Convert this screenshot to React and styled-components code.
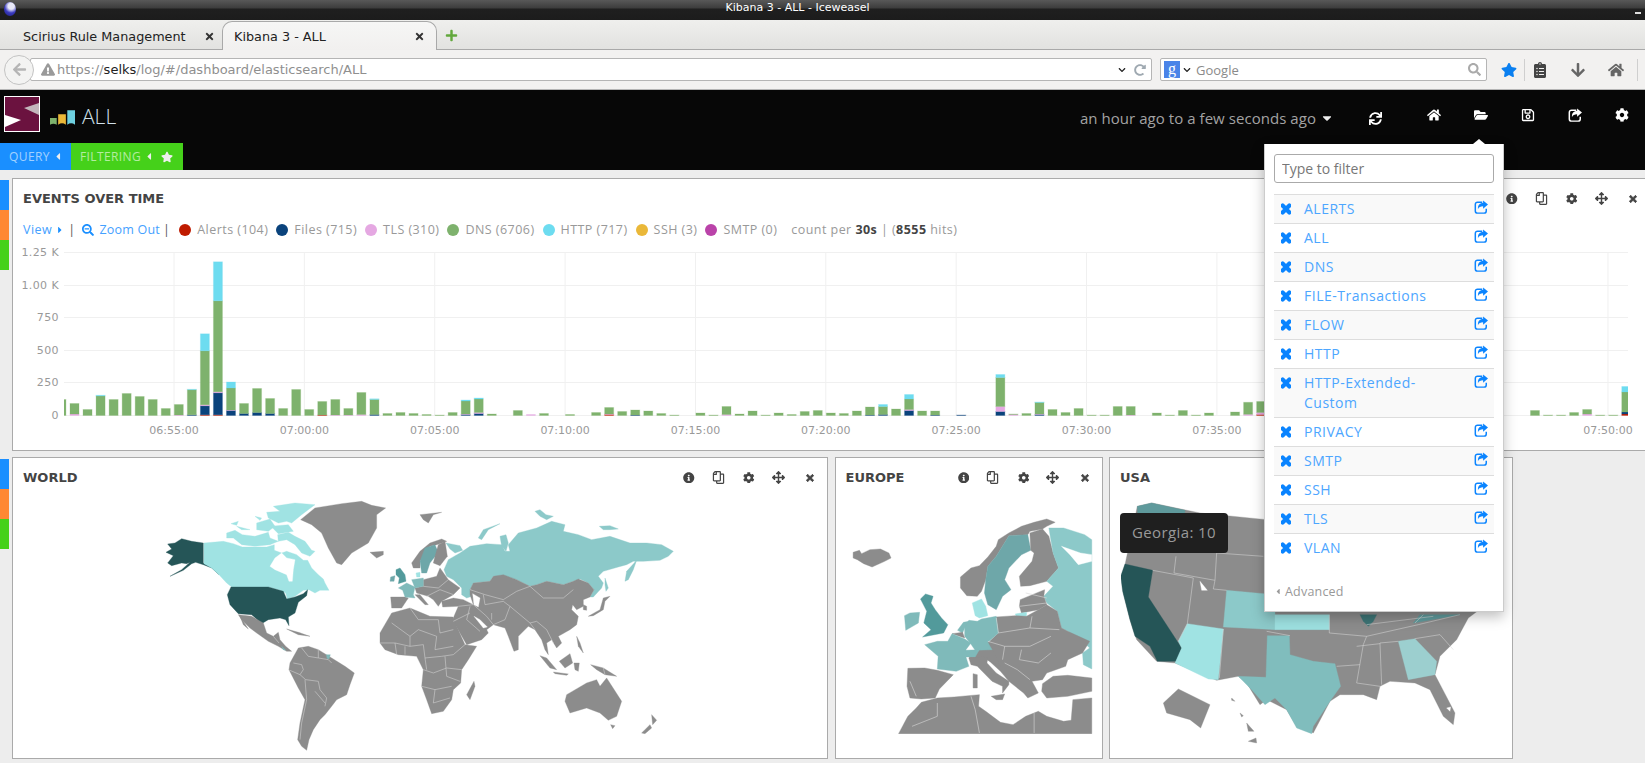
import React from 'react';
import styled, { createGlobalStyle } from 'styled-components';
import {
  FaArrowLeft,
  FaExclamationTriangle,
  FaChevronDown,
  FaRedoAlt,
  FaStar,
  FaClipboardList,
  FaArrowDown,
  FaHome,
  FaCaretDown,
  FaCaretLeft,
  FaCaretRight,
  FaSync,
  FaFolderOpen,
  FaRegSave,
  FaCog,
  FaTimes,
  FaInfoCircle,
  FaRegCopy,
  FaArrowsAlt,
  FaSearchMinus,
  FaPlus,
  FaSearch,
} from 'react-icons/fa';

const GRAY = '#8c8c8c';
const DARK = '#255557';
const PALE = '#a0e3e3';
const RUSSIA = '#8cc9c9';
const TEAL = '#7fbaba';
const SWEDEN = '#6ea7a9';
const UKC = '#529a9b';

const C = {
  alert: '#bf1b00',
  files: '#0a437c',
  tls: '#e5a8e2',
  dns: '#7eb26d',
  http: '#6ddcf0',
  ssh: '#eab839',
  smtp: '#ba43a9',
};

// index, dns, http, tls, files, alert (heights in px)
const BARS = [
  [-1, 16], [0, 10.5, 0, 1.5], [1, 6], [2, 19.5, 0.7], [3, 16], [4, 22], [5, 19], [6, 16], [7, 7], [8, 10.5, 0, 0.5],
  [9, 25, 0.5, 0, 0.7], [10, 54, 17, 1, 9, 0.7], [11, 91, 39, 1, 22, 0.7], [12, 22, 6, 0.5, 5], [13, 10, 0, 0, 2], [14, 24, 0, 0, 3],
  [15, 15, 0, 0, 2], [16, 7], [17, 26], [18, 6], [19, 13.5, 0, 0, 0, 0.5], [20, 15.5, 0, 0.5], [21, 6.5, 0, 0.5], [22, 22, 0, 1],
  [23, 15, 0.7, 0, 1], [24, 2], [25, 3], [26, 2], [27, 1], [28, 0.5], [29, 3], [30, 13, 1, 0.5, 1], [31, 13.5, 1, 1, 2],
  [32, 1.5], [34, 5], [35, 0, 0, 1], [36, 2], [38, 1], [40, 3], [41, 6.5, 0, 0.5, 0, 1], [42, 4], [43, 5, 0, 0, 0.5], [44, 4.5],
  [45, 2], [46, 0.5], [48, 2.5], [49, 0.5], [50, 8, 0, 1], [51, 1.5], [52, 4.5], [53, 0.5], [54, 2.5], [55, 1], [56, 4], [57, 5],
  [58, 2.5], [59, 2], [60, 4.5], [61, 8, 0, 0, 0.5], [62, 8, 2, 0, 1], [63, 6.5], [64, 10.5, 4.5, 1, 5], [65, 4.5], [66, 4, 0, 0, 0.5],
  [68, 0, 0, 0, 0.5], [71, 29, 3, 5, 4], [72, 0.5, 0, 1], [73, 2], [74, 11.5, 0.5, 0.5, 1], [75, 6], [76, 3], [77, 7], [78, 0.5],
  [79, 0.5], [80, 9], [81, 8.5, 0, 0.5], [83, 2.5], [84, 0.5], [85, 5], [86, 0.5], [87, 2.5], [89, 3.5], [90, 12, 0, 1.2], [91, 11, 0, 2, 0, 1],
  [112, 5], [113, 0.5], [114, 0.5], [115, 3], [116, 4.5, 0, 1.5], [117, 0.5], [118, 0.5], [119, 20, 5.5, 0, 2, 1.5],
];

const Y_TICKS = [
  ['1.25 K', 252],
  ['1.00 K', 285],
  ['750', 317],
  ['500', 350],
  ['250', 382],
  ['0', 415],
];

// the 07:40 and 07:45 labels sit behind the open dashboard menu
const X_TICKS = [
  '06:55:00', '07:00:00', '07:05:00', '07:10:00', '07:15:00', '07:20:00',
  '07:25:00', '07:30:00', '07:35:00', '', '', '07:50:00',
];

const LEGEND = [
  ['Alerts (104)', C.alert],
  ['Files (715)', C.files],
  ['TLS (310)', C.tls],
  ['DNS (6706)', C.dns],
  ['HTTP (717)', C.http],
  ['SSH (3)', C.ssh],
  ['SMTP (0)', C.smtp],
];

const DASHBOARDS = [
  'ALERTS', 'ALL', 'DNS', 'FILE-Transactions', 'FLOW', 'HTTP', 'HTTP-Extended-Custom',
  'PRIVACY', 'SMTP', 'SSH', 'TLS', 'VLAN',
];

// coordinates read off the 3x crop starting at (155,470)
const AMERICAS = [
  [DARK, '145,210 110,205 80,197 60,210 38,213 50,228 33,238 55,248 38,270 50,278 80,270 95,272 105,268 80,290 45,310 85,292 110,272 122,268 145,275 170,285 192,305 180,290 165,280 145,270'],
  [PALE, '147,210 205,205 235,212 262,222 300,222 335,222 358,215 358,232 380,240 395,235 425,245 445,262 458,262 470,285 490,305 505,318 510,330 522,352 495,352 480,360 462,350 445,352 420,370 397,378 392,360 375,352 340,342 230,342 215,330 192,305 170,285 147,272'],
  ['#fff', '345,280 360,255 380,240 395,255 420,260 415,290 412,325 402,325 395,305 360,290'],
  [PALE, '215,180 240,172 262,185 300,190 340,178 345,195 370,205 345,215 300,220 260,215 235,195 215,195'],
  [PALE, '228,152 250,145 245,157'],
  [PALE, '245,160 285,170 260,170'],
  [PALE, '300,130 320,135 315,142'],
  [PALE, '305,150 345,138 360,160 340,175 305,170'],
  [PALE, '348,160 400,155 415,175 370,182'],
  [PALE, '368,185 400,178 420,190 450,205 470,232 480,235 465,250 440,240 420,215 395,200 370,205'],
  [PALE, '355,100 420,90 480,95 440,125 410,150 395,145 370,150 340,135 335,118 375,115'],
  [DARK, '228,342 340,342 385,355 395,378 420,372 445,362 458,350 455,368 430,388 420,420 400,432 402,458 392,440 375,435 340,440 320,452 290,425 250,422 225,395 217,365'],
  [GRAY, '437,140 480,105 560,92 620,85 650,97 692,105 665,125 665,165 640,210 590,240 560,275 545,270 520,225 500,180 470,155'],
  [GRAY, '645,238 685,235 685,245 665,255'],
  [GRAY, '250,425 290,430 325,450 335,480 355,490 370,478 375,500 392,520 410,535 395,535 370,520 340,505 305,480 285,465 260,440'],
  [GRAY, '255,430 265,445 280,468 265,455'],
  [TEAL, '380,520 392,532 385,530'],
  [GRAY, '395,468 430,478 465,490 430,485'],
  [GRAY, '405,570 430,525 460,520 490,530 530,555 570,580 598,600 585,635 575,665 545,680 530,700 510,725 495,740 475,770 462,800 455,832 440,820 428,800 435,750 450,680 430,645 402,590'],
  [TEAL, '514,545 526,545 522,558 516,556'],
];
const AMERICAS_LINES = [
  '415,570 440,575 445,590 435,605 452,620 490,625 495,650 515,675 510,700',
  '450,620 455,680 440,750 435,800',
  '440,525 460,550 490,555 520,560 530,570',
  '480,655 510,690',
  '400,590 435,605',
  '490,530 490,555',
  '355,490 372,510',
];

// coordinates read off the 3x crop starting at (370,470)
const EURASIA = [
  [GRAY, '150,125 215,118 190,125 175,150 160,140'],
  [GRAY, '125,270 150,235 180,210 215,198 230,205 200,215 180,220 150,265 150,285 130,285'],
  [SWEDEN, '150,265 165,225 195,215 205,238 180,270 170,300 155,300'],
  [GRAY, '195,250 205,215 225,205 232,250 210,278 190,270'],
  [UKC, '78,290 90,285 105,305 108,325 85,332 88,315 78,305'],
  [SWEDEN, '62,312 75,308 72,325 60,325'],
  [GRAY, '62,372 105,372 115,375 95,405 65,405'],
  [RUSSIA, '222,290 235,260 270,240 300,220 350,212 395,215 405,235 420,235 415,215 445,180 500,165 545,145 585,155 580,175 625,185 665,200 720,190 780,210 830,210 875,215 910,235 895,250 870,262 820,265 790,265 770,275 745,282 700,295 685,310 700,330 695,345 670,372 660,372 672,350 655,330 630,318 610,325 580,335 530,325 500,335 480,340 440,320 400,308 370,310 360,325 310,330 300,350 320,365 290,375 275,365 275,345 250,320 230,310'],
  [RUSSIA, '228,210 270,218 278,232 255,240 240,228'],
  [RUSSIA, '325,195 340,170 390,152 355,170 335,200'],
  [RUSSIA, '495,115 510,110 528,125 550,130 530,140 510,130'],
  [RUSSIA, '688,160 720,158 745,168 720,170 700,170'],
  [RUSSIA, '705,315 715,345 708,355 705,335'],
  [RUSSIA, '765,325 770,295 800,262 790,290 775,320'],
  [RUSSIA, '390,190 408,185 415,210 408,235 395,220'],
  [GRAY, '300,350 310,330 360,325 370,310 400,305 440,320 480,340 500,335 530,325 580,335 610,325 625,318 655,330 672,350 660,372 640,380 640,400 620,410 608,395 605,410 625,430 620,455 600,470 565,490 575,510 560,525 545,500 530,510 535,545 525,530 515,500 495,470 475,460 445,490 445,530 432,535 415,490 405,465 370,455 350,470 355,480 335,500 290,515 270,480 250,445 252,430 265,400 218,402 215,385 250,375 280,380 310,395 300,365'],
  ['#fff', '308,362 330,375 325,402 312,395'],
  ['#fff', '312,430 340,465 352,462 330,440'],
  [GRAY, '30,480 65,420 120,405 180,430 250,432 260,460 285,515 320,520 295,560 275,590 272,630 250,650 245,680 220,715 185,722 170,680 155,640 160,590 140,550 85,545 45,530 30,510'],
  [GRAY, '290,665 312,625 315,640 300,680'],
  [GRAY, '160,320 200,310 210,285 235,320 270,345 250,365 215,385 205,400 190,380 175,370 140,360 135,345 160,340'],
  [TEAL, '85,345 110,330 135,342 130,365 135,375 105,372 98,352'],
  [TEAL, '125,320 160,315 160,340 135,345'],
  [PALE, '138,300 150,298 150,312 140,312'],
  [GRAY, '135,365 150,365 175,395 165,395'],
  [GRAY, '655,430 690,410 700,375 720,370 705,385 700,410 670,428'],
  [GRAY, '640,395 650,400 650,412 640,410'],
  [GRAY, '620,490 630,510 640,540 625,520'],
  [GRAY, '510,548 530,555 560,590 540,585'],
  [GRAY, '550,597 595,603 590,607 555,602'],
  [GRAY, '568,565 600,542 608,570 585,585'],
  [GRAY, '612,570 628,570 625,595 615,590'],
  [GRAY, '662,575 700,585 740,610 705,605 680,590'],
  [GRAY, '590,665 650,630 680,620 690,640 710,615 755,685 740,730 715,742 690,720 650,705 600,720 585,685'],
  [GRAY, '722,755 735,758 728,767'],
  [GRAY, '815,780 840,755 845,765 825,782'],
  [GRAY, '845,725 860,742 848,755'],
];
const EURASIA_LINES = [
  '480,340 520,375 580,375 610,350',
  '300,350 345,365 400,380 440,355 480,340',
  '340,365 345,395 400,385 420,400 405,440 370,455',
  '420,400 480,450 500,445 530,470 550,510',
  '480,450 495,470',
  '265,400 310,395 350,430 370,455',
  '300,400 290,440 330,475',
  '120,405 145,440 205,440 210,480 250,470',
  '65,450 120,490 145,470 200,490 195,530 250,520',
  '30,510 75,510 120,520 160,515 165,555 215,550 250,545 285,515',
  '120,490 120,520',
  '75,510 80,545',
  '105,520 105,545',
  '160,590 190,600 230,585 275,590',
  '165,555 170,590',
  '225,550 230,610 270,625',
  '155,640 195,650 245,640',
  '195,650 190,690 240,675',
  '160,340 205,345 235,320',
  '170,370 210,350 250,365',
  '700,585 705,605',
  '250,445 300,420',
  '365,420 365,440',
];

// x 2.376, y 3 crop starting at (790,430)
const EUROPE = [
  [GRAY, '150,358 165,352 170,362 190,350 215,348 235,360 240,375 225,385 195,402 175,392 160,380 150,375'],
  [GRAY, '405,432 430,405 450,398 470,372 490,340 495,320 520,300 550,280 580,268 610,258 630,268 610,280 600,288 570,295 565,305 520,308 490,370 470,400 465,440 455,475 445,490 420,488 405,465'],
  [SWEDEN, '470,400 490,370 520,308 565,305 572,352 550,365 520,405 510,440 525,470 505,490 490,530 470,515 462,480 465,440'],
  [GRAY, '570,300 600,288 615,310 625,360 638,405 610,445 570,458 548,460 545,430 575,385 580,360 572,352'],
  [RUSSIA, '615,285 650,285 700,305 717,320 717,708 697,695 695,660 712,645 695,625 660,595 645,585 635,535 610,510 603,490 625,460 610,445 638,405 625,360'],
  ['#fff', '645,340 690,360 717,365 717,385 685,395 665,365'],
  [GRAY, '547,500 605,470 603,490 610,515 590,530 550,540 545,520'],
  [PALE, '535,543 562,538 562,550 538,550'],
  [GRAY, '490,552 535,548 562,550 590,530 610,515 635,535 645,585 660,595 712,625 695,660 660,680 655,700 610,720 600,740 575,745 590,780 565,795 555,780 545,770 520,745 500,715 470,680 475,665 440,675 425,675 470,630 495,600'],
  [GRAY, '425,672 470,625 482,650 500,700 470,682'],
  [TEAL, '415,580 425,562 445,565 455,558 490,550 495,600 470,628 480,650 440,652 428,630 415,610'],
  [PALE, '433,510 455,498 465,520 470,548 450,555 440,548'],
  [TEAL, '398,592 412,568 425,565 415,585 410,600'],
  [GRAY, '385,602 410,598 415,615'],
  [TEAL, '320,635 350,625 375,625 385,602 415,618 430,630 418,650 418,672 425,700 395,715 350,708 352,670'],
  [TEAL, '415,652 450,650 440,672 418,672'],
  [UKC, '310,498 322,483 340,490 335,510 345,530 360,555 375,575 365,600 315,612 335,590 318,570 325,535'],
  [TEAL, '272,548 285,540 308,538 305,570 275,592'],
  [GRAY, '280,706 320,705 350,712 388,725 355,768 345,795 312,798 285,795 278,760'],
  [GRAY, '425,675 470,672 468,690 490,720 520,745 520,755 505,780 505,760 480,745 445,700 430,695'],
  [GRAY, '435,722 445,725 445,765 435,765'],
  [GRAY, '478,790 510,783 505,800 490,800'],
  [GRAY, '600,752 625,730 660,727 717,735 717,775 660,790 610,795 598,775'],
  [GRAY, '258,902 280,850 300,825 312,808 350,795 390,792 450,785 448,820 465,835 500,868 530,875 560,850 590,835 610,850 650,865 668,862 672,800 717,795 717,902'],
];
const EUROPE_LINES = [
  '490,555 495,600 570,585 640,590',
  '570,585 575,550',
  '470,625 510,640 570,640 620,610',
  '510,640 505,680',
  '550,650 545,680 590,690 620,660',
  '510,690 540,710',
  '540,710 570,740',
  '430,790 440,830 450,900',
  '350,810 350,850 290,880',
  '580,840 580,900',
  '285,745 300,790',
  '560,480 610,495',
  '545,520 610,510',
];

// 3x crop starting at (1100,490)
const USA = [
  [GRAY, '112,40 155,30 300,60 500,80 700,70 1205,300 1105,375 1070,440 1020,490 1005,545 1065,660 1060,695 1030,670 990,590 945,570 870,565 840,580 830,620 790,605 720,605 690,625 640,720 590,700 560,650 500,620 480,635 440,570 415,550 360,560 350,562 225,510 170,505 110,440 90,380 70,300 65,250 75,215'],
  ['#5f9a9c', '112,40 155,30 255,52 250,110 115,95'],
  [DARK, '75,213 158,232 145,312 245,465 228,505 172,505 150,460 105,430 90,380 68,295 62,250'],
  [PALE, '262,392 370,408 355,560 325,558 225,510 245,465 235,445'],
  [RUSSIA, '380,292 525,305 525,410 370,402'],
  ['#9de0e0', '525,365 688,365 688,410 525,410'],
  ['#80bdbd', '502,428 568,428 570,485 640,505 705,512 722,580 690,625 640,700 635,722 590,705 560,650 525,615 495,635 455,590 415,550 498,553'],
  ['#9ccfcf', '895,445 945,437 1010,505 1005,545 925,560'],
  ['#3d7475', '780,365 830,365 820,385 805,400 790,385'],
  ['#5f9a9c', '940,390 1080,365 960,365'],
  ['#fff', '300,265 322,292 305,292'],
  ['#fff', '1040,645 1052,642 1050,655'],
  [GRAY, '190,630 235,588 330,635 302,705 270,680 200,660'],
  [GRAY, '395,615 405,625 395,622'],
  [GRAY, '420,660 430,668 425,672'],
  [GRAY, '440,690 462,715 445,715'],
  [GRAY, '445,745 468,735 470,750'],
];
const USA_LINES = [
  '228,190 222,240 345,262 350,180 490,190',
  '158,232 280,255 262,392 235,445',
  '345,262 340,288 380,292',
  '500,415 570,428',
  '688,420 800,430 790,455 770,570 840,580',
  '710,520 780,515',
  '800,430 955,395 1080,365',
  '840,450 845,575',
  '895,445 840,450',
  '945,437 1020,425 1060,470',
  '688,365 688,420',
  '358,555 370,408',
  '970,365 945,390',
  '800,395 1000,370',
  '770,460 840,452',
];

const MapLayer = ({ shapes, lines, transform }) => (
  <g transform={transform}>
    {shapes.map(([fill, points], i) => (
      <polygon key={i} fill={fill} stroke={fill} strokeWidth="1" strokeLinejoin="round" points={points} />
    ))}
    {lines.map((points, i) => (
      <polyline key={i} fill="none" stroke="#d8d8d8" strokeWidth="1.6" points={points} />
    ))}
  </g>
);

// font awesome 3 share glyph, the package only has a thinner one
const ShareIcon = ({ className }) => (
  <svg className={className} viewBox="0 0 16 16">
    <path d="M9.500 2.500H4a2.500 2.500 0 0 0-2.500 2.500v7.500A2.500 2.500 0 0 0 4 15h7.500a2.500 2.500 0 0 0 2.500-2.500V10" fill="none" stroke="currentColor" strokeWidth="1.7" />
    <path d="M16 5.200 10.400.5v3C6 3.500 4.300 6.300 4.500 10.500c1-2.700 3-3.500 5.900-3.500v3z" fill="currentColor" />
  </svg>
);

// icon, gap before it, size
const PANEL_TOOLS = [
  [FaInfoCircle, 0, 11.5],
  [FaRegCopy, 16.75, 13],
  [FaCog, 18.75, 11.5],
  [FaArrowsAlt, 16.75, 13],
  [FaTimes, 20.5, 10],
];

const PanelTools = () => (
  <ToolRow>
    {PANEL_TOOLS.map(([Icon, gap, size], i) => (
      <PanelTool key={i} $gap={gap} $size={size} $flip={Icon === FaRegCopy} $bold={Icon === FaTimes}>
        <Icon />
      </PanelTool>
    ))}
  </ToolRow>
);

const Chart = () => (
  <ChartSvg width="1632" height="205" viewBox="13 245 1632 205">
    {Y_TICKS.map(([label, y]) => (
      <g key={label}>
        <line x1="64" x2="1628" y1={y + 0.5} y2={y + 0.5} stroke="#f0f0f0" />
        <text x="59" y={y + 4} textAnchor="end" fontSize="11" letterSpacing=".4" fill="#999">
          {label}
        </text>
      </g>
    ))}
    {X_TICKS.map((label, i) => {
      const x = 174 + i * 130.36;
      return (
        <g key={i}>
          <line x1={x} x2={x} y1="252" y2="415" stroke="#f0f0f0" />
          {label && (
            <text x={x} y="434" textAnchor="middle" fontSize="11" fill="#999">
              {label}
            </text>
          )}
        </g>
      );
    })}
    <clipPath id="plot">
      <rect x="64" y="240" width="1564" height="176" />
    </clipPath>
    <g clipPath="url(#plot)">
      {BARS.map(([i, dns, http = 0, tls = 0, files = 0, alert = 0]) => {
        const x = 70 + i * 13.04;
        let y = 415.5;
        const segs = [
          [alert, C.alert],
          [files, C.files],
          [tls, C.tls],
          [dns, C.dns],
          [http, C.http],
        ];
        return segs.map(([h, fill], k) => {
          if (!h) return null;
          y -= h;
          return (
            <rect key={`${i}-${k}`} x={x} y={y} width="9" height={h} fill={fill} stroke={fill} strokeOpacity=".25" />
          );
        });
      })}
    </g>
  </ChartSvg>
);

const App = () => {
  return (
    <Page>
      <GlobalStyle />
      <TitleBar>
        <AppGlobe />
        <WindowTitle>Kibana 3 - ALL - Iceweasel</WindowTitle>
        <Minimize />
      </TitleBar>

      <TabStrip>
        <Tab>
          <TabLabel>Scirius Rule Management</TabLabel>
          <FaTimes />
        </Tab>
        <Tab $active>
          <TabLabel>Kibana 3 - ALL</TabLabel>
          <FaTimes />
        </Tab>
        <NewTab>
          <FaPlus />
        </NewTab>
      </TabStrip>

      <NavBar>
        <BackButton>
          <FaArrowLeft />
        </BackButton>
        <UrlBox>
          <FaExclamationTriangle />
          <UrlText>
            https://<b>selks</b>/log/#/dashboard/elasticsearch/ALL
          </UrlText>
          <FaChevronDown className="drop" />
          <FaRedoAlt className="reload" />
        </UrlBox>
        <SearchBox>
          <GoogleBadge>g</GoogleBadge>
          <FaChevronDown className="drop" />
          <SearchPlaceholder>Google</SearchPlaceholder>
          <FaSearch className="go" />
        </SearchBox>
        <NavIcon $color="#0a7ff0" $gap={14}>
          <FaStar />
        </NavIcon>
        <NavSep $left={7} />
        <NavIcon $color="#444" $gap={7}>
          <FaClipboardList />
        </NavIcon>
        <NavIcon $color="#666" $gap={22}>
          <FaArrowDown />
        </NavIcon>
        <NavIcon $color="#666" $gap={22}>
          <FaHome />
        </NavIcon>
        <NavSep $left={13} />
      </NavBar>

      <KibanaNav>
        <BrandRow>
          <Logo viewBox="0 0 36 36">
            <rect width="36" height="36" fill="#fff" />
            <rect x="1" y="1" width="34" height="34" fill="#6b123f" />
            <polygon points="35,7 20,12 35,19" fill="#c4b6bc" />
            <polygon points="1,19 17,24 1,31" fill="#fff" />
          </Logo>
          <MiniLogo viewBox="0 0 26 15">
            <path d="M0 8h7v7q-3.500-2-7 0z" fill="#7eb26d" />
            <path d="M8.500 4h8v11q-4-3-8 0z" fill="#eab839" />
            <path d="M18 0h8v15q-4-3-8 0z" fill="#6ed0e0" />
          </MiniLogo>
          <DashName>ALL</DashName>
          <Tools>
            <TimeLabel>
              an hour ago to a few seconds ago <FaCaretDown />
            </TimeLabel>
            <RefreshSlot>
              <FaSync />
            </RefreshSlot>
            <ToolSlot>
              <FaHome />
            </ToolSlot>
            <ToolSlot>
              <FaFolderOpen />
            </ToolSlot>
            <ToolSlot>
              <FaRegSave />
            </ToolSlot>
            <ToolSlot>
              <ShareIcon />
            </ToolSlot>
            <ToolSlot>
              <FaCog />
            </ToolSlot>
          </Tools>
        </BrandRow>
        <PillRow>
          <Pill $bg="#1a8fff">
            QUERY <FaCaretLeft />
          </Pill>
          <Pill $bg="#45d11a">
            FILTERING <FaCaretLeft /> <FaStar className="star" />
          </Pill>
        </PillRow>
      </KibanaNav>

      <Dashboard>
        <Row $height={273}>
          <SideHandle />
          <Panel $width={1639}>
            <PanelHeader>
              <PanelTitle>EVENTS OVER TIME</PanelTitle>
              <PanelTools />
            </PanelHeader>
            <Legend>
              <LinkText>View</LinkText>
              <CaretWrap>
                <FaCaretRight />
              </CaretWrap>
              <Pipe $right={7}>|</Pipe>
              <ZoomOut>
                <FaSearchMinus />
                Zoom Out
              </ZoomOut>
              <Pipe $right={9}>|</Pipe>
              {LEGEND.map(([label, color]) => (
                <LegendItem key={label}>
                  <Dot $color={color} />
                  {label}
                </LegendItem>
              ))}
              <LegendCount>
                count per <b>30s</b> | (<b>8555</b> hits)
              </LegendCount>
            </Legend>
            <Chart />
          </Panel>
        </Row>
        <Row $height={302}>
          <SideHandle />
          <Panels>
            <Panel $width={816}>
              <PanelHeader>
                <PanelTitle>WORLD</PanelTitle>
                <PanelTools />
              </PanelHeader>
              <MapSvg width="540" height="262" viewBox="150 490 540 262">
                <MapLayer shapes={AMERICAS} lines={AMERICAS_LINES} transform="translate(155 470) scale(.3333)" />
                <MapLayer shapes={EURASIA} lines={EURASIA_LINES} transform="translate(370 470) scale(.3333)" />
              </MapSvg>
            </Panel>
            <Panel $width={268}>
              <PanelHeader>
                <PanelTitle>EUROPE</PanelTitle>
                <PanelTools />
              </PanelHeader>
              <MapSvg width="248" height="241" viewBox="845 490 248 241">
                <MapLayer shapes={EUROPE} lines={EUROPE_LINES} transform="translate(790 430) scale(.4209 .3333)" />
              </MapSvg>
            </Panel>
            <Panel $width={404}>
              <PanelHeader>
                <PanelTitle>USA</PanelTitle>
              </PanelHeader>
              <MapSvg width="380" height="262" viewBox="1121 490 380 262">
                <MapLayer shapes={USA} lines={USA_LINES} transform="translate(1100 490) scale(.3333)" />
              </MapSvg>
              <MapTip>Georgia: 10</MapTip>
            </Panel>
          </Panels>
        </Row>
      </Dashboard>

      <Popover>
        <FilterInput placeholder="Type to filter" />
        <DashList>
          {DASHBOARDS.map(name => (
            <DashRow key={name}>
              <FaTimes className="del" />
              <DashLink>{name}</DashLink>
              <ShareIcon className="share" />
            </DashRow>
          ))}
        </DashList>
        <Advanced>
          <FaCaretLeft /> Advanced
        </Advanced>
      </Popover>
    </Page>
  );
};

export default App;

const GlobalStyle = createGlobalStyle`
  html, body {
    margin: 0;
    padding: 0;
    overflow: hidden;
    background: #ededed;
  }
  * { box-sizing: border-box; }
  b { font-weight: 700; }
`;

const Page = styled.div`
  position: relative;
  width: 1645px;
  height: 763px;
  overflow: hidden;
  font-family: "Open Sans", "Liberation Sans", sans-serif;
  background: #ededed;
`;

const TitleBar = styled.div`
  display: flex;
  align-items: flex-start;
  position: relative;
  height: 20px;
  padding-top: 1px;
  background: linear-gradient(#585858 0, #3c3c3c 8px, #1f1f1f 9px, #1c1c1c 100%);
`;

const AppGlobe = styled.div`
  width: 12px;
  height: 14px;
  margin: 1px 0 0 4px;
  border-radius: 50%;
  background: radial-gradient(circle at 60% 30%, #e8e8f8 0 25%, #3a3ac0 55%, #20207a);
`;

const WindowTitle = styled.div`
  position: absolute;
  left: 0;
  right: 50px;
  top: 0;
  text-align: center;
  font: 11px/15px "DejaVu Sans", sans-serif;
  color: #fff;
`;

const Minimize = styled.div`
  position: absolute;
  right: 4px;
  top: 12px;
  width: 6px;
  height: 2px;
  background: #ddd;
`;

const TabStrip = styled.div`
  display: flex;
  align-items: flex-end;
  height: 30px;
  padding-left: 11px;
  background: linear-gradient(#efefed, #e2e2e0);
  border-bottom: 1px solid #a9a9a9;
`;

const Tab = styled.div`
  display: flex;
  align-items: center;
  justify-content: space-between;
  height: ${props => (props.$active ? '29px' : '28px')};
  width: ${props => (props.$active ? '215px' : '211px')};
  padding: ${props => (props.$active ? '0 12px 0 11px' : '0 8px 0 12px')};
  margin-bottom: -1px;
  font: 12.8px "DejaVu Sans", sans-serif;
  color: #222;
  background: ${props => (props.$active ? 'linear-gradient(#f6f6f5, #f1f0ef)' : 'transparent')};
  border: ${props => (props.$active ? '1px solid #a9a9a9' : '0')};
  border-bottom: 0;
  border-radius: ${props => (props.$active ? '10px 10px 0 0' : '0')};

  svg {
    width: 9px;
    height: 11px;
    color: #333;
  }
`;

const TabLabel = styled.span`
  white-space: nowrap;
`;

const NewTab = styled.div`
  display: flex;
  align-items: center;
  height: 28px;
  margin-left: 8px;
  color: #62a83c;

  svg {
    width: 13px;
    height: 13px;
  }
`;

const NavBar = styled.div`
  display: flex;
  align-items: center;
  height: 40px;
  padding-left: 4px;
  background: #f2f1f0;
  border-bottom: 1px solid #b5b5b5;
`;

const BackButton = styled.div`
  display: flex;
  align-items: center;
  justify-content: center;
  flex: none;
  position: relative;
  z-index: 1;
  width: 30px;
  height: 30px;
  margin-right: -4px;
  border: 1px solid #c3c3c3;
  border-radius: 50%;
  background: #f3f3f2;
  color: #b5b5b5;

  svg {
    width: 15px;
    height: 15px;
  }
`;

const UrlBox = styled.div`
  display: flex;
  align-items: center;
  width: 1122px;
  height: 23px;
  padding: 0 5px 0 10px;
  background: #fff;
  border: 1px solid #b5b5b5;
  border-radius: 2px;
  color: #999;

  > svg:first-child {
    width: 14px;
    height: 13px;
    margin-right: 2px;
    color: #9a9a9a;
  }

  .drop {
    width: 10px;
    height: 8px;
    color: #222;
    margin-right: 7px;
  }

  .reload {
    width: 12px;
    height: 12px;
    color: #9fa9b1;
  }
`;

const UrlText = styled.div`
  flex: 1;
  font: 13px "DejaVu Sans", sans-serif;
  color: #8f8f8f;

  b {
    font-weight: 400;
    color: #222;
  }
`;

const SearchBox = styled.div`
  display: flex;
  align-items: center;
  flex: none;
  width: 327px;
  height: 23px;
  margin-left: 8px;
  padding: 0 5px 0 3px;
  background: #fff;
  border: 1px solid #b5b5b5;
  border-radius: 2px;

  .drop {
    width: 10px;
    height: 8px;
    margin: 0 4px 0 2px;
    color: #222;
  }

  .go {
    width: 13px;
    height: 13px;
    color: #aaa;
  }
`;

const GoogleBadge = styled.div`
  width: 16px;
  height: 17px;
  background: #4a84e8;
  color: #fff;
  font: 16px/15px "Liberation Serif", serif;
  text-align: center;
`;

const SearchPlaceholder = styled.div`
  flex: 1;
  font: 13px "Open Sans", sans-serif;
  color: #8a8a8a;
`;

const NavIcon = styled.div`
  display: flex;
  flex: none;
  margin-left: ${props => props.$gap}px;
  color: ${props => props.$color};

  svg {
    width: 16px;
    height: 16px;
  }
`;

const NavSep = styled.div`
  flex: none;
  width: 1px;
  height: 22px;
  margin-left: ${props => props.$left}px;
  background: #cfcfcf;
`;

const KibanaNav = styled.div`
  display: flex;
  flex-direction: column;
  height: 80px;
  background: #070707;
`;

const BrandRow = styled.div`
  display: flex;
  align-items: flex-start;
  height: 53px;
  padding: 6px 0 0 4px;
`;

const Logo = styled.svg`
  flex: none;
  width: 36px;
  height: 36px;
`;

const MiniLogo = styled.svg`
  flex: none;
  width: 25px;
  height: 15px;
  margin: 14px 0 0 10px;
`;

const DashName = styled.div`
  margin: 6px 0 0 7px;
  font-size: 21px;
  line-height: 28px;
  font-weight: 300;
  color: #cfe0ea;
`;

const Tools = styled.div`
  display: flex;
  align-items: center;
  margin-left: auto;
  height: 40px;
  color: #fff;
`;

const TimeLabel = styled.div`
  display: flex;
  align-items: center;
  gap: 6px;
  font-size: 15px;
  letter-spacing: .05px;
  margin-top: 4px;
  color: #a3a3a3;

  svg {
    width: 10px;
    height: 14px;
    color: #eee;
  }
`;

const ToolSlot = styled.div`
  display: flex;
  align-items: center;
  justify-content: center;
  width: 47px;
  height: 20px;
  margin-top: -2px;

  svg {
    width: 14px;
    height: 14px;
  }
`;

const RefreshSlot = styled(ToolSlot)`
  margin: 4px 11px 0 20px;

  svg {
    width: 13px;
    height: 13px;
  }
`;

const PillRow = styled.div`
  display: flex;
  height: 27px;
`;

const Pill = styled.div`
  display: flex;
  align-items: center;
  gap: 5px;
  padding: 0 10px 0 9px;
  font-size: 12px;
  letter-spacing: .4px;
  background: ${props => props.$bg};
  color: rgba(255, 255, 255, .6);

  svg {
    width: 6px;
    height: 11px;
    color: #eee;
  }

  .star {
    width: 12px;
    height: 12px;
    margin-left: 4px;
  }
`;

const Dashboard = styled.div`
  display: flex;
  flex-direction: column;
  gap: 6px;
  padding-top: 8px;
`;

const Row = styled.div`
  display: flex;
  height: ${props => props.$height}px;
`;

const SideHandle = styled.div`
  flex: none;
  width: 9px;
  height: 90px;
  margin: 2px 3px 0 0;
  background: linear-gradient(#1a8fff 0 30px, #ff8833 30px 60px, #45d11a 60px);
`;

const Panels = styled.div`
  display: flex;
  gap: 6.5px;
`;

const Panel = styled.section`
  position: relative;
  flex: none;
  width: ${props => props.$width}px;
  background: #fff;
  border: 1px solid #aaa;
`;

const PanelHeader = styled.header`
  display: flex;
  align-items: center;
  justify-content: space-between;
  height: 31px;
  margin-top: 4px;
  padding: 0 12px 0 10px;
`;

const PanelTitle = styled.h4`
  margin: 0;
  font: bold 13px "DejaVu Sans", sans-serif;
  color: #444;
`;

const ToolRow = styled.div`
  display: flex;
  align-items: center;
  color: #444;
`;

const PanelTool = styled.span`
  display: flex;
  margin-left: ${props => props.$gap}px;
  transform: ${props => (props.$flip ? 'scaleX(-1)' : 'none')};

  svg {
    width: ${props => props.$size}px;
    height: ${props => props.$size}px;
    stroke: currentColor;
    stroke-width: ${props => (props.$bold ? 50 : 0)};
  }
`;

const Legend = styled.div`
  display: flex;
  align-items: center;
  height: 31px;
  padding-left: 10px;
  font-size: 12.5px;
  letter-spacing: .45px;
  color: #999;
`;

const LinkText = styled.span`
  color: #45a1ff;
`;

const CaretWrap = styled.span`
  display: flex;
  margin: 0 5px;
  color: #1a8fff;

  svg {
    width: 6px;
    height: 10px;
  }
`;

const Pipe = styled.span`
  color: #555;
  margin-right: ${props => props.$right}px;
`;

const ZoomOut = styled.span`
  display: flex;
  align-items: center;
  gap: 5px;
  margin-right: 3px;
  letter-spacing: .2px;
  color: #45a1ff;

  svg {
    width: 12px;
    height: 12px;
    color: #1a8fff;
  }
`;

const LegendItem = styled.span`
  display: flex;
  align-items: center;
  gap: 6px;
  margin-right: 8px;
`;

const Dot = styled.i`
  width: 12px;
  height: 12px;
  border-radius: 50%;
  background: ${props => props.$color};
`;

const LegendCount = styled.span`
  margin-left: 6px;

  b {
    color: #444;
  }
`;

const ChartSvg = styled.svg`
  display: block;
  font-family: "DejaVu Sans", sans-serif;
`;

const MapSvg = styled.svg`
  display: block;
  margin: 0 auto;
`;

const MapTip = styled.div`
  position: absolute;
  left: 10px;
  top: 55px;
  width: 108px;
  height: 40px;
  border-radius: 4px;
  background: #1f1f1f;
  color: #999;
  font-size: 15px;
  letter-spacing: .4px;
  line-height: 38px;
  text-align: center;
`;

const Popover = styled.div`
  position: absolute;
  z-index: 10;
  left: 1264px;
  top: 144px;
  width: 240px;
  height: 468px;
  padding: 10px 9px;
  background: #fff;
  border: 1px solid #ccc;
  border-top: 0;
  box-shadow: 0 5px 12px rgba(0, 0, 0, .25);

  &::before {
    content: '';
    position: absolute;
    left: 208px;
    top: -5px;
    border-left: 6px solid transparent;
    border-right: 6px solid transparent;
    border-bottom: 5px solid #fff;
  }
`;

const FilterInput = styled.input`
  display: block;
  width: 220px;
  height: 29px;
  padding: 0 7px;
  font: 14px "Open Sans", sans-serif;
  border: 1px solid #aaa;
  border-radius: 3px;
  outline: none;

  &::placeholder {
    color: #777;
    opacity: 1;
  }
`;

const DashList = styled.div`
  margin-top: 11px;
`;

const DashRow = styled.div`
  display: flex;
  align-items: flex-start;
  padding: 4px 0;
  border-top: 1px solid #ddd;

  &:nth-child(odd) {
    background: #f9f9f9;
  }

  .del {
    flex: none;
    width: 10px;
    height: 14px;
    margin: 3px 0 0 7px;
    color: #0a84ff;
    stroke: currentColor;
    stroke-width: 60;
  }

  .share {
    flex: none;
    width: 14px;
    height: 14px;
    margin: 1px 6px 0 auto;
    color: #0a84ff;
  }
`;

const DashLink = styled.span`
  width: 125px;
  margin-left: 13px;
  font-size: 14px;
  line-height: 20px;
  letter-spacing: .5px;
  color: #4da6ff;
`;

const Advanced = styled.div`
  display: flex;
  align-items: center;
  gap: 4px;
  margin: 21px 0 0 1px;
  font-size: 12.5px;
  letter-spacing: .2px;
  color: #999;

  svg {
    width: 6px;
    height: 9px;
  }
`;
